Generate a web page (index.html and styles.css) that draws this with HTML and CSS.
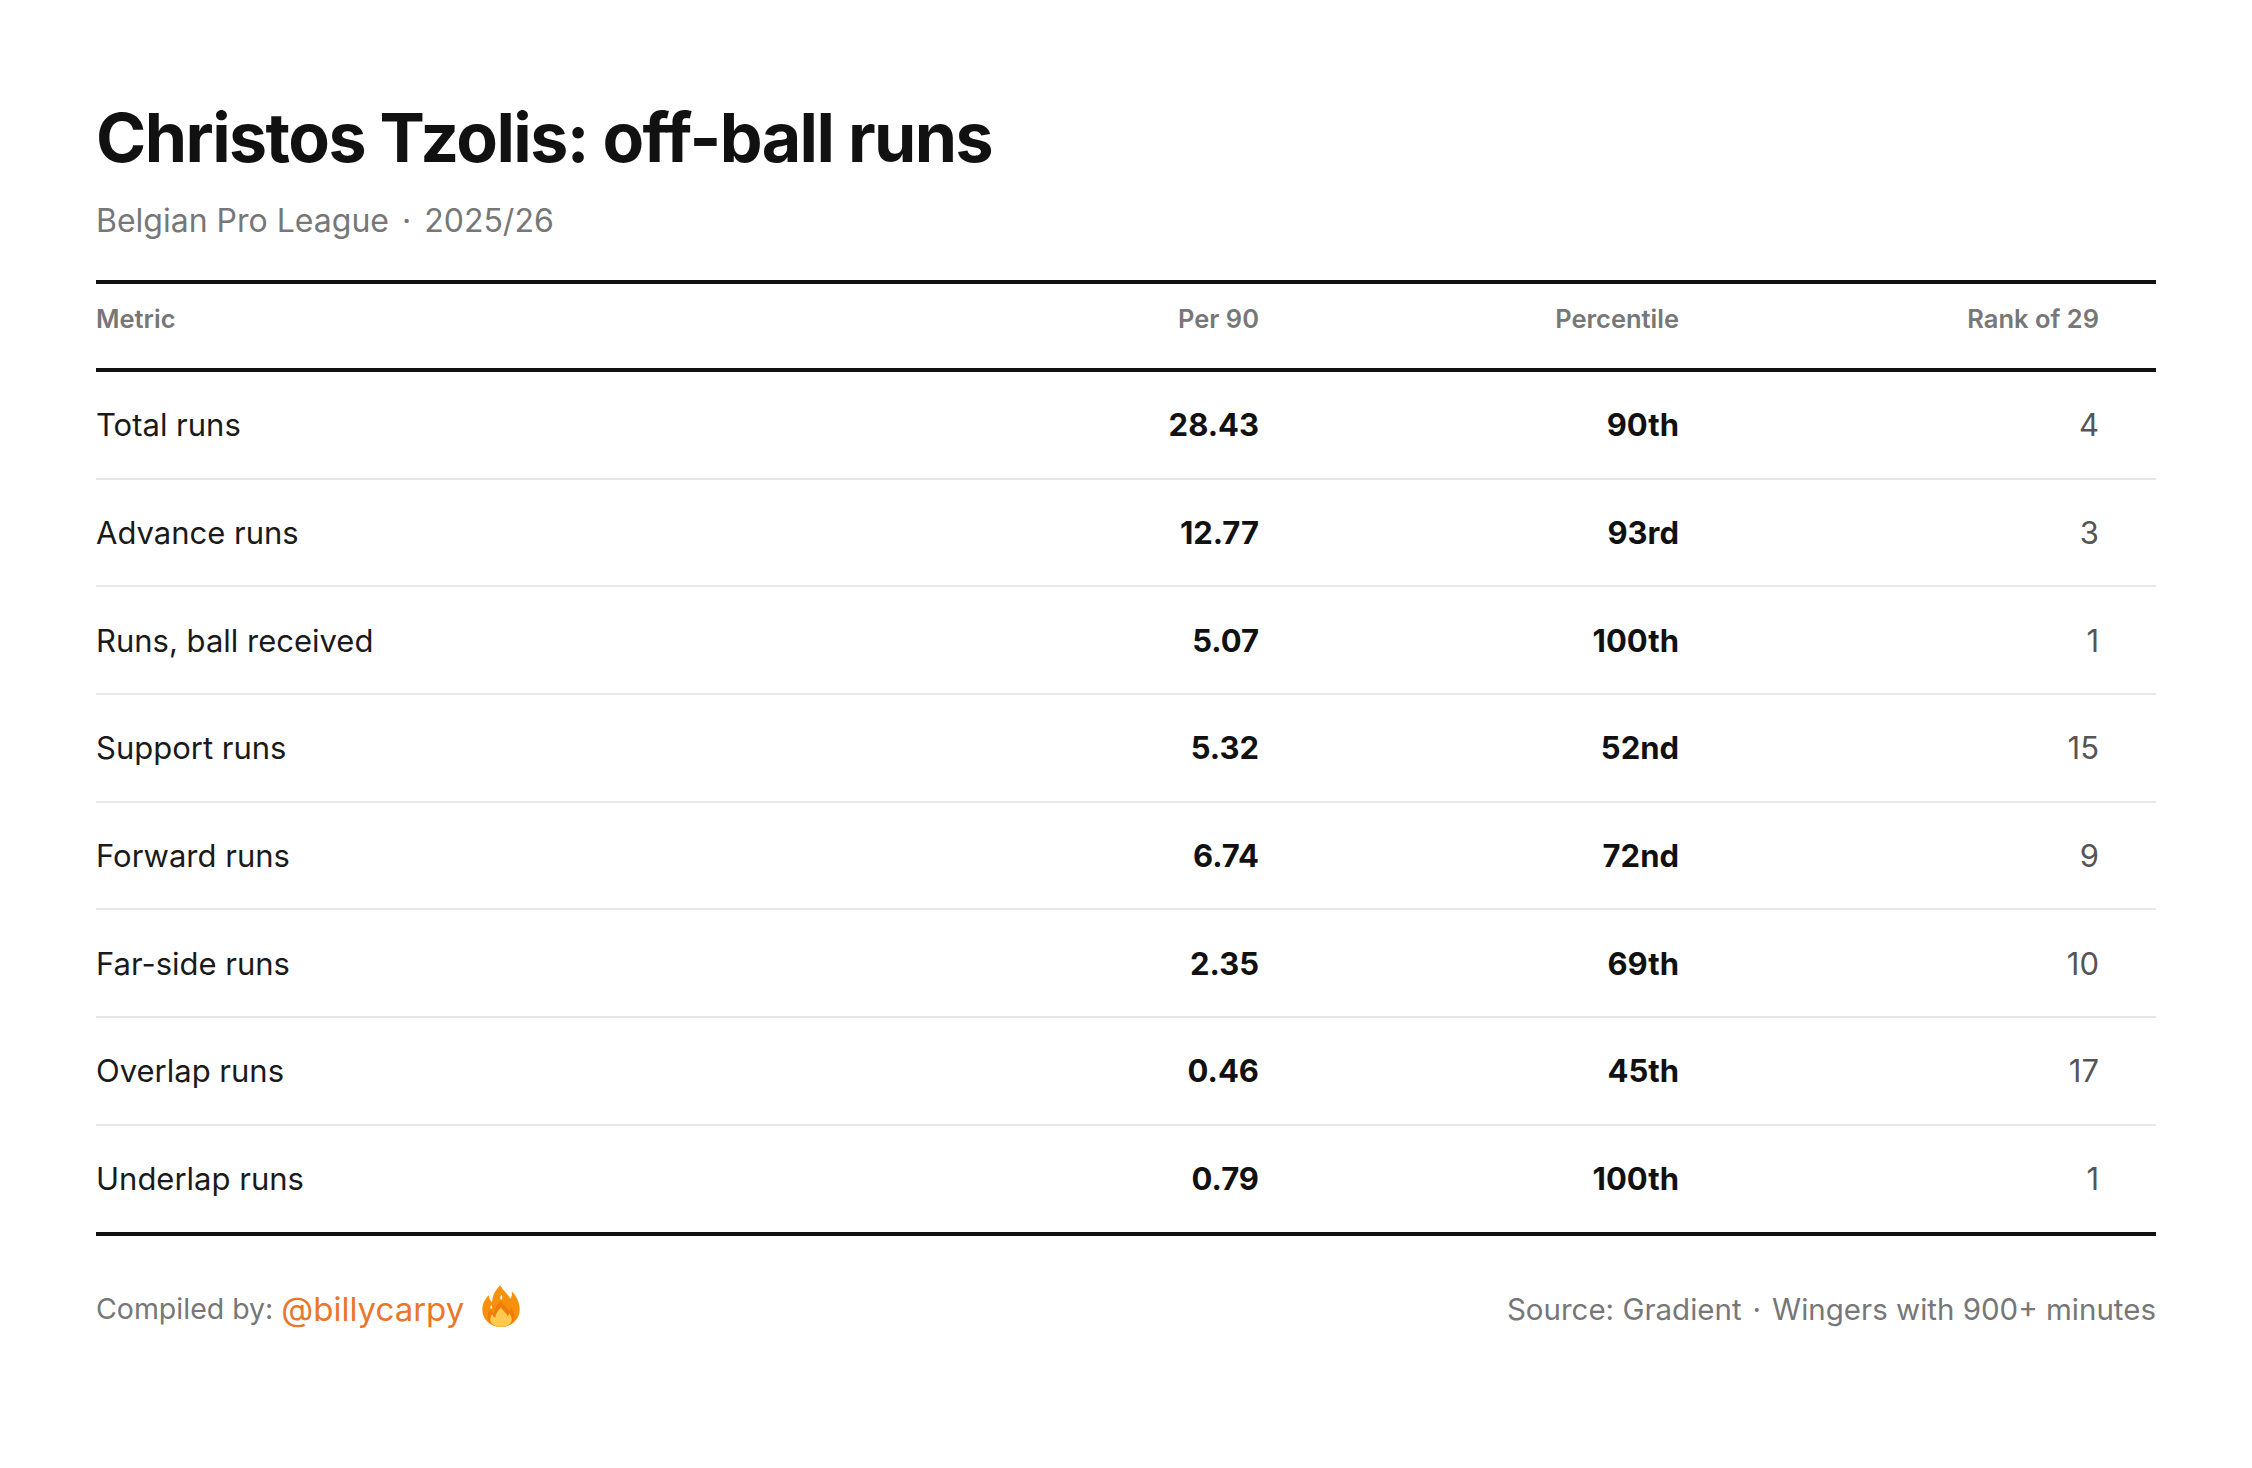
FILE: index.html
```html
<!DOCTYPE html>
<html lang="en">
<head>
<meta charset="utf-8">
<title>Christos Tzolis: off-ball runs</title>
<link rel="stylesheet" href="styles.css">
</head>
<body>
<main class="page">
  <h1 class="title">Christos Tzolis: off-ball runs</h1>
  <p class="subtitle">Belgian Pro League<span class="sep">·</span>2025/26</p>

  <div class="table">
    <div class="row head">
      <div class="cell metric">Metric</div>
      <div class="cell num">Per 90</div>
      <div class="cell num">Percentile</div>
      <div class="cell num">Rank of 29</div>
    </div>
    <div class="row">
      <div class="cell metric">Total runs</div>
      <div class="cell num val">28.43</div>
      <div class="cell num val">90th</div>
      <div class="cell num rank">4</div>
    </div>
    <div class="row">
      <div class="cell metric">Advance runs</div>
      <div class="cell num val">12.77</div>
      <div class="cell num val">93rd</div>
      <div class="cell num rank">3</div>
    </div>
    <div class="row">
      <div class="cell metric">Runs, ball received</div>
      <div class="cell num val">5.07</div>
      <div class="cell num val">100th</div>
      <div class="cell num rank">1</div>
    </div>
    <div class="row">
      <div class="cell metric">Support runs</div>
      <div class="cell num val">5.32</div>
      <div class="cell num val">52nd</div>
      <div class="cell num rank">15</div>
    </div>
    <div class="row">
      <div class="cell metric">Forward runs</div>
      <div class="cell num val">6.74</div>
      <div class="cell num val">72nd</div>
      <div class="cell num rank">9</div>
    </div>
    <div class="row">
      <div class="cell metric">Far-side runs</div>
      <div class="cell num val">2.35</div>
      <div class="cell num val">69th</div>
      <div class="cell num rank">10</div>
    </div>
    <div class="row">
      <div class="cell metric">Overlap runs</div>
      <div class="cell num val">0.46</div>
      <div class="cell num val">45th</div>
      <div class="cell num rank">17</div>
    </div>
    <div class="row">
      <div class="cell metric">Underlap runs</div>
      <div class="cell num val">0.79</div>
      <div class="cell num val">100th</div>
      <div class="cell num rank">1</div>
    </div>
  </div>

  <footer class="footer">
    <div class="credit">
      <span>Compiled by:</span>
      <span class="handle">@billycarpy</span>
      <svg class="fire" viewBox="0 0 32 32" aria-hidden="true">
        <path fill="#F7900B" d="M15.5 1.5 C17.5 5.5 21 7.5 22.5 11 C23.6 9.6 23.8 8 23.4 5.8 C26.8 9 29 13.5 29 18.5 C29 25.6 23.3 30.5 16 30.5 C8.7 30.5 3 25.6 3 18.5 C3 14.2 5 11 7.6 8.6 C7.6 10.8 8.4 12.3 9.8 13.4 C9.9 8.4 12.4 4.6 15.5 1.5 Z"/>
        <path fill="#FFFFFF" d="M16.3 8.2 C15.3 9.4 15.2 10.8 16.2 11.6 C17.2 10.9 17.2 9.5 16.3 8.2 Z"/>
        <path fill="#FFFFFF" d="M9.2 15.3 C8.4 16.3 8.4 17.6 9.3 18.2 C10.1 17.5 10 16.3 9.2 15.3 Z"/>
        <path fill="#F07A0A" d="M16 12.5 C17.4 15.6 20.6 16.8 21.8 20 C22.6 19.2 22.9 18.2 22.8 17 C24.6 19 25.3 21.4 25.3 23.4 C25.3 27.8 21.3 30.5 16 30.5 C10.7 30.5 6.7 27.8 6.7 23.4 C6.7 21.2 7.6 19.4 9 18 C9.2 19.6 10 20.6 11.2 21.2 C11.4 17.6 13.2 14.8 16 12.5 Z"/>
        <path fill="#FFCA4F" d="M16 17 C17.2 19.4 19.8 20.6 20.6 23 C21.2 22.6 21.6 21.8 21.7 21 C23 22.4 23.5 24 23.5 25.2 C23.5 28.5 20.3 30.5 16 30.5 C11.7 30.5 8.5 28.5 8.5 25.2 C8.5 23.8 9.1 22.6 10 21.7 C10.3 23 11 23.8 12 24.2 C12.2 21.4 13.8 19 16 17 Z"/>
      </svg>
    </div>
    <div class="source">Source: Gradient<span class="sep">·</span>Wingers with 900+ minutes</div>
  </footer>
</main>
</body>
</html>
```

FILE: styles.css
```css
html, body {
  margin: 0;
  padding: 0;
  background: #ffffff;
}

body {
  font-family: Inter, "Noto Sans", "Liberation Sans", sans-serif;
  color: #1a1a1a;
}

.page {
  width: 2252px;
  box-sizing: border-box;
  padding: 103px 96px 0 96px;
}

.title {
  margin: 0;
  font-size: 68px;
  line-height: 68px;
  font-weight: 700;
  letter-spacing: -1.55px;
  color: #111111;
}

.subtitle {
  margin: 34px 0 0 0;
  font-size: 32px;
  line-height: 32px;
  font-weight: 400;
  color: #777777;
}

.subtitle .sep {
  display: inline-block;
  margin: 0 13px;
}

.table {
  margin-top: 43px;
  border-top: 4px solid #111111;
  border-bottom: 4px solid #111111;
}

.row {
  display: grid;
  grid-template-columns: 1fr 420px 420px 420px;
  align-items: center;
  height: 105.7px;
  border-bottom: 2px solid #e6e6e6;
  font-size: 31px;
  line-height: 31px;
}

.row:last-child {
  border-bottom: none;
}

.row.head {
  height: 88px;
  border-bottom: 4px solid #111111;
  font-size: 25.5px;
  line-height: 26px;
  font-weight: 600;
  color: #777777;
  align-items: start;
  padding-top: 22px;
  box-sizing: border-box;
}

.cell.num {
  text-align: right;
  padding-right: 57px;
}

.cell.val {
  font-weight: 700;
  color: #111111;
}

.cell.rank {
  color: #555555;
}

.footer {
  display: flex;
  justify-content: space-between;
  align-items: center;
  margin-top: 50px;
  font-size: 28.5px;
  line-height: 46px;
  color: #777777;
}

.credit {
  display: flex;
  align-items: center;
  gap: 8px;
}

.handle {
  font-size: 33px;
  color: #E8772A;
}

.fire {
  width: 46px;
  height: 46px;
  margin-left: 6px;
  margin-top: -6px;
}

.source {
  font-size: 29.5px;
}

.source .sep {
  display: inline-block;
  margin: 0 11px;
}
```
